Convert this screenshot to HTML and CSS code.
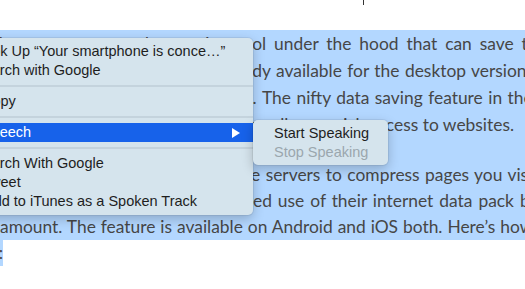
FILE: index.html
```html
<!DOCTYPE html>
<html lang="en">
<head>
    <meta charset="UTF-8">
    <title>Speech menu</title>
    <link rel="stylesheet" href="styles.css">
</head>
<body>
    <div class="top"><div class="caret"></div></div>

    <div class="sel">
        <div class="para">
            <div class="ln l1"><span class="pre w262"><span>Google Chrome has an awesome data saving too</span></span><span>l under the hood that can save the</span></div>
            <div class="ln l2"><span class="pre w262"><span>a lot of mobile data. It is alread</span></span><span>y available for the desktop version of</span></div>
            <div class="ln l3"><span class="pre w262"><span>Chrome for quite some time now.&nbsp;</span></span><span>The nifty data saving feature in the</span></div>
            <div class="ln"><span class="pre w394"><span>mobile version of Chrome allows quick acc</span></span><span>ess to websites.</span></div>
        </div>
        <div class="para p2">
            <div class="ln l5"><span class="pre w251"><span>Chrome uses th</span></span><span>e servers to compress pages you visit</span></div>
            <div class="ln l6"><span class="pre w253"><span>helping users make limit</span></span><span>ed use of their internet data pack by</span></div>
            <div class="ln l7"><span>amount. The feature is available on Android and iOS both. Here’s how</span></div>
        </div>
    </div>
    <div class="tail"><span class="tail-hl"><span>:</span></span></div>

    <!-- context menu -->
    <div class="menu">
        <div class="item nudge-a">Look Up “Your smartphone is conce…”</div>
        <div class="item nudge-b">Search with Google</div>
        <div class="sep"></div>
        <div class="item">Copy</div>
        <div class="sep"></div>
        <div class="item active">
            <span>Speech</span>
            <svg class="arrow" width="8" height="10" viewBox="0 0 8 10"><path d="M0 0 L8 5 L0 10 Z" fill="#fff"/></svg>
        </div>
        <div class="sep"></div>
        <div class="item nudge-b">Search With Google</div>
        <div class="item">Tweet</div>
        <div class="item nudge-c">Add to iTunes as a Spoken Track</div>
    </div>

    <div class="submenu">
        <div class="item">Start Speaking</div>
        <div class="item disabled">Stop Speaking</div>
    </div>
</body>
</html>
```

FILE: styles.css
```css
body {
    margin: 0;
    width: 525px;
    height: 289px;
    overflow: hidden;
    position: relative;
    background-color: #fff;
    font-family: "Lato", sans-serif;
    font-size: 17.4px;
    color: #464646;
}

.top {
    height: 30px;
}

.caret {
    margin-left: 363px;
    width: 1px;
    height: 5px;
    background-color: #333;
}

.sel {
    background-color: #b3d7ff;
}

.para + .para {
    margin-top: 24px;
}

.ln {
    display: flex;
    height: 27px;
    line-height: 27px;
    white-space: nowrap;
}

.p2 .ln {
    height: 26px;
    line-height: 26px;
}

.pre {
    flex: none;
    display: flex;
    justify-content: flex-end;
}

.w251 { width: 251px; }
.w253 { width: 253px; }
.w262 { width: 262px; }
.w394 { width: 394px; }

.l1 { word-spacing: 3.5px; }
.l2 { word-spacing: 1px; }
.l3 { word-spacing: 1px; }
.l5 { word-spacing: 1px; }
.l6 { word-spacing: 1.5px; }
.l7 { word-spacing: 0.5px; }

.tail {
    display: flex;
    height: 26px;
    line-height: 26px;
}

.tail-hl {
    width: 3px;
    display: flex;
    justify-content: flex-end;
    overflow: hidden;
    background-color: #b3d7ff;
}

/* menus */
.menu,
.submenu {
    position: absolute;
    background-color: #d5e4ed;
    border-radius: 5px;
    box-shadow: 0 0 0 1px rgba(0, 0, 0, 0.06), 0 4px 12px rgba(0, 0, 0, 0.22);
    font-family: "Liberation Sans", Arial, sans-serif;
    font-size: 14.5px;
    color: #1e1e1e;
}

.menu {
    left: -39px;
    top: 38px;
    width: 292px;
    padding: 4px 0;
}

.submenu {
    left: 253px;
    top: 120px;
    width: 135px;
    padding: 4px 0 3px;
}

.item {
    height: 19px;
    line-height: 19px;
    padding: 0 13px 0 21px;
    display: flex;
    justify-content: space-between;
    align-items: center;
    white-space: nowrap;
}

.item.active {
    background-color: #1762ea;
    color: #fff;
}

.item.disabled {
    color: #9ba7ae;
}

.nudge-a { text-indent: -6px; }
.nudge-b { text-indent: -8px; }
.nudge-c { text-indent: 2px; }

.sep {
    height: 2px;
    margin: 5px 0;
    background-color: #c4d3dd;
}
```
